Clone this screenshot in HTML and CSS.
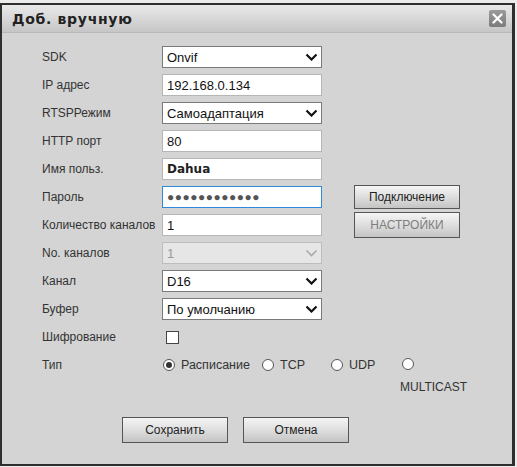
FILE: index.html
```html
<!DOCTYPE html>
<html>
<head>
<meta charset="utf-8">
<link rel="stylesheet" href="styles.css">
</head>
<body>
<div class="page">
  <div class="dialog">
    <div class="titlebar">
      <span class="title">Доб. вручную</span>
      <span class="close"><svg width="11" height="11" viewBox="0 0 11 11"><path d="M1.5 1.5 L9.5 9.5 M9.5 1.5 L1.5 9.5" stroke="#fff" stroke-width="2.2" stroke-linecap="round"/></svg></span>
    </div>
    <div class="body">
      <div class="form">
        <div class="row"><div class="label">SDK</div><div class="field select"><span>Onvif</span><svg class="chev" width="13" height="8" viewBox="0 0 13 8"><path d="M1.5 1.5 L6.5 6.5 L11.5 1.5" fill="none" stroke="#111" stroke-width="2.2"/></svg></div></div>
        <div class="row"><div class="label">IP адрес</div><div class="field input">192.168.0.134</div></div>
        <div class="row"><div class="label">RTSPРежим</div><div class="field select"><span>Самоадаптация</span><svg class="chev" width="13" height="8" viewBox="0 0 13 8"><path d="M1.5 1.5 L6.5 6.5 L11.5 1.5" fill="none" stroke="#111" stroke-width="2.2"/></svg></div></div>
        <div class="row"><div class="label">HTTP порт</div><div class="field input">80</div></div>
        <div class="row"><div class="label">Имя польз.</div><div class="field input user">Dahua</div></div>
        <div class="row"><div class="label">Пароль</div><div class="field input focus"><span class="dots">●●●●●●●●●●●●</span></div><button class="btn side">Подключение</button></div>
        <div class="row"><div class="label">Количество каналов</div><div class="field input">1</div><button class="btn side disabled">НАСТРОЙКИ</button></div>
        <div class="row"><div class="label">No. каналов</div><div class="field select disabled"><span>1</span><svg class="chev" width="13" height="8" viewBox="0 0 13 8"><path d="M1.5 1.5 L6.5 6.5 L11.5 1.5" fill="none" stroke="#aaa" stroke-width="1.6"/></svg></div></div>
        <div class="row"><div class="label">Канал</div><div class="field select"><span>D16</span><svg class="chev" width="13" height="8" viewBox="0 0 13 8"><path d="M1.5 1.5 L6.5 6.5 L11.5 1.5" fill="none" stroke="#111" stroke-width="2.2"/></svg></div></div>
        <div class="row"><div class="label">Буфер</div><div class="field select"><span>По умолчанию</span><svg class="chev" width="13" height="8" viewBox="0 0 13 8"><path d="M1.5 1.5 L6.5 6.5 L11.5 1.5" fill="none" stroke="#111" stroke-width="2.2"/></svg></div></div>
        <div class="row"><div class="label">Шифрование</div><div class="checkcell"><span class="checkbox"></span></div></div>
        <div class="row type"><div class="label">Тип</div>
          <div class="radios">
            <span class="opt r1"><span class="radio on"></span>Расписание</span>
            <span class="opt r2"><span class="radio"></span>TCP</span>
            <span class="opt r3"><span class="radio"></span>UDP</span>
            <span class="opt r4"><span class="radio"></span><span class="mc">MULTICAST</span></span>
          </div>
        </div>
      </div>
      <div class="actions">
        <button class="btn main">Сохранить</button>
        <button class="btn main">Отмена</button>
      </div>
    </div>
  </div>
</div>
</body>
</html>
```
FILE: styles.css
```css
html, body {
  margin: 0;
  padding: 0;
}
body {
  width: 517px;
  height: 467px;
  background: #ececec;
  font-family: Arial, "Liberation Sans", sans-serif;
  font-size: 12px;
  color: #333;
  overflow: hidden;
}
.page {
  padding-top: 3px;
}
.dialog {
  width: 510px;
  height: 459px;
  border: 2px solid #2e2e2e;
  border-right-width: 3px;
  background: #d4d4d4;
  display: flex;
  flex-direction: column;
}
.titlebar {
  height: 27px;
  background: linear-gradient(#e9e9e9, #c6c6c6);
  border-bottom: 1px solid #b8b8b8;
  display: flex;
  align-items: center;
  justify-content: space-between;
  padding: 0 6px 0 10px;
}
.title {
  font-family: "DejaVu Sans", Verdana, sans-serif;
  font-weight: bold;
  font-size: 14px;
  letter-spacing: 0.7px;
  color: #222;
}
.close {
  width: 17px;
  height: 17px;
  background: linear-gradient(#9a9a9a, #7c7c7c);
  border-radius: 2px;
  display: flex;
  align-items: center;
  justify-content: center;
}
.body {
  flex: 1;
  display: flex;
  flex-direction: column;
  padding: 13px 0 0 0;
}
.form {
  display: flex;
  flex-direction: column;
  gap: 6px;
}
.row {
  display: flex;
  align-items: center;
  height: 22px;
}
.label {
  width: 120px;
  padding-left: 40px;
  color: #333;
}
.field {
  width: 160px;
  height: 22px;
  box-sizing: border-box;
  border: 1px solid #9a9a9a;
  background: #fff;
  display: flex;
  align-items: center;
  padding-left: 4px;
  font-size: 13px;
  color: #111;
}
.select {
  justify-content: space-between;
  border-color: #7a7a7a;
  padding-right: 3px;
}
.select.disabled {
  background: #e6e6e6;
  border-color: #bdbdbd;
  color: #9a9a9a;
}
.input {
  border-color: #b6b6b6;
}
.input.user {
  font-family: "DejaVu Sans", Verdana, sans-serif;
  font-weight: bold;
  font-size: 12px;
  color: #222;
}
.input.focus {
  border-color: #2e8ad8;
}
.dots {
  font-size: 12px;
  letter-spacing: 0.5px;
  color: #555;
}
.btn {
  font-family: Arial, "Liberation Sans", sans-serif;
  font-size: 12px;
  color: #222;
  background: linear-gradient(#f5f5f5, #d9d9d9 60%, #c4c4c4);
  border: 1px solid #555;
  padding: 0;
  box-sizing: border-box;
}
.btn.side {
  width: 106px;
  height: 24px;
  margin-left: 32px;
}
.row:nth-child(7) .btn.side {
  height: 26px;
}
.btn.disabled {
  color: #7e7e7e;
}
.checkcell {
  padding-left: 4px;
}
.checkbox {
  display: block;
  width: 11px;
  height: 11px;
  background: #fff;
  border: 1px solid #444;
}
.row.type {
  align-items: flex-start;
  height: 46px;
}
.row.type .label {
  line-height: 22px;
}
.radios {
  position: relative;
  width: 330px;
  height: 46px;
}
.opt {
  position: absolute;
  top: 4px;
  display: flex;
  align-items: center;
  font-size: 12.5px;
  color: #333;
}
.radio {
  width: 12px;
  height: 12px;
  box-sizing: border-box;
  border: 1px solid #555;
  border-radius: 50%;
  background: #fff;
  margin-right: 6px;
  display: inline-flex;
  align-items: center;
  justify-content: center;
}
.radio.on::after {
  content: "";
  width: 6px;
  height: 6px;
  border-radius: 50%;
  background: #333;
}
.r1 { left: 1px; }
.r2 { left: 100px; }
.r3 { left: 169px; }
.r4 { left: 240px; }
.mc {
  position: absolute;
  left: -2px;
  top: 22px;
  font-size: 12px;
}
.actions {
  display: flex;
  gap: 15px;
  padding-left: 120px;
  margin-top: 17px;
}
.btn.main {
  width: 106px;
  height: 26px;
}
```
